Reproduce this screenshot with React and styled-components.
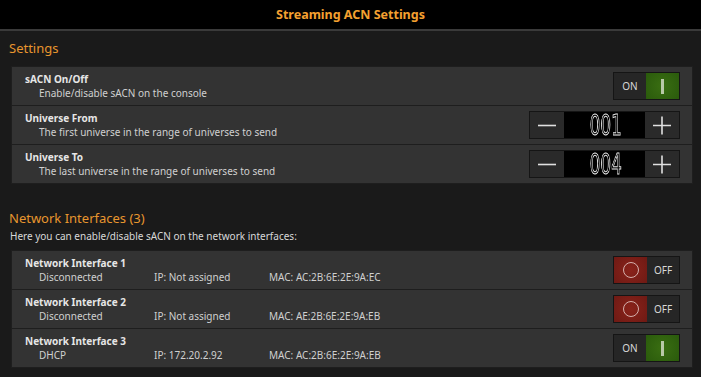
import React from "react";
import styled, { createGlobalStyle } from "styled-components";

const Global = createGlobalStyle`
  html, body {
    margin: 0;
    padding: 0;
    background: #1a1a1a;
  }
  body {
    font-family: "Noto Sans", "Open Sans", sans-serif;
    color: #dcdcdc;
  }
`;

const Page = styled.div`
  width: 701px;
  height: 377px;
  background: #1a1a1a;
  overflow: hidden;
`;

const Header = styled.div`
  height: 29px;
  background: #000;
  border-bottom: 2px solid #3a3a3a;
  display: flex;
  align-items: center;
  justify-content: center;
  color: #f5a030;
  font-weight: 700;
  font-size: 12.5px;
`;

const Section = styled.div`
  padding: 0 9px 0 11px;
`;

const SectionTitle = styled.div`
  color: #e8962e;
  font-size: 13px;
  margin-left: -2px;
  height: ${(p) => p.h}px;
  display: flex;
  align-items: ${(p) => (p.bottom ? "flex-end" : "center")};
`;

const Hint = styled.div`
  font-size: 10px;
  color: #d8d8d8;
  margin-left: -1px;
  height: 18px;
  display: flex;
  align-items: center;
  margin-bottom: 5px;
`;

const Panel = styled.div`
  background: #1e1e1e;
  border: 1px solid #1e1e1e;
  display: flex;
  flex-direction: column;
  gap: 1px;
  width: 680px;
  margin-top: ${(p) => p.mt || 0}px;
`;

const Row = styled.div`
  height: 38px;
  background: #333333;
  display: flex;
  align-items: center;
  padding: 0 12px 0 13px;
`;

const Info = styled.div`
  flex: 1;
  display: flex;
  flex-direction: column;
  justify-content: center;
  padding-top: 1px;
`;

const Title = styled.div`
  font-weight: 700;
  font-size: 10px;
  color: #e6e6e6;
  line-height: 14px;
`;

const Sub = styled.div`
  font-size: 10px;
  color: #d0d0d0;
  line-height: 15px;
  padding-left: 14px;
  display: flex;
`;

const Col = styled.span`
  width: ${(p) => p.w}px;
  flex: none;
`;

const Toggle = styled.div`
  display: flex;
  width: 67px;
  height: 28px;
  border: 1px solid #151515;
  box-sizing: border-box;
`;

const ToggleLabel = styled.div`
  width: 32px;
  background: #262626;
  display: flex;
  align-items: center;
  justify-content: center;
  font-size: 10px;
  color: #d8d8d8;
`;

const ToggleKnob = styled.div`
  flex: 1;
  display: flex;
  align-items: center;
  justify-content: center;
  background: ${(p) =>
    p.on
      ? "radial-gradient(circle at 50% 50%, #3a6e12 0%, #2a5a0c 100%)"
      : "radial-gradient(circle at 50% 50%, #8a221a 0%, #6e1a14 100%)"};
`;

const Bar = styled.div`
  width: 3px;
  height: 15px;
  background: #b9c9a8;
`;

const Ring = styled.div`
  width: 14px;
  height: 14px;
  border: 1.5px solid #d6b0ac;
  border-radius: 50%;
`;

const Stepper = styled.div`
  display: flex;
  width: 151px;
  height: 28px;
  border: 1px solid #151515;
  box-sizing: border-box;
`;

const StepBtn = styled.div`
  width: 34px;
  background: #2a2a2a;
  display: flex;
  align-items: center;
  justify-content: center;
`;

const Display = styled.div`
  flex: 1;
  background: #000;
  display: flex;
  align-items: center;
  justify-content: center;
`;

const Digits = styled.span`
  display: inline-block;
  font-family: "DejaVu Sans", sans-serif;
  font-size: 29px;
  letter-spacing: 0px;
  color: #000;
  -webkit-text-stroke: 1px #e6e6e6;
  transform: scaleX(0.58);
  will-change: transform;
  line-height: 1;
  margin-left: 2px;
`;

const Minus = () => (
  <svg width="20" height="20" viewBox="0 0 20 20">
    <path d="M1 10.5h18" stroke="#e0e0e0" strokeWidth="1.6" />
  </svg>
);

const Plus = () => (
  <svg width="20" height="20" viewBox="0 0 20 20">
    <path d="M1 10.5h18M10 1.5v18" stroke="#e0e0e0" strokeWidth="1.6" />
  </svg>
);

const Switch = ({ on }) =>
  on ? (
    <Toggle>
      <ToggleLabel>ON</ToggleLabel>
      <ToggleKnob on>
        <Bar />
      </ToggleKnob>
    </Toggle>
  ) : (
    <Toggle>
      <ToggleKnob>
        <Ring />
      </ToggleKnob>
      <ToggleLabel>OFF</ToggleLabel>
    </Toggle>
  );

const Counter = ({ value }) => (
  <Stepper>
    <StepBtn>
      <Minus />
    </StepBtn>
    <Display>
      <Digits>{value}</Digits>
    </Display>
    <StepBtn>
      <Plus />
    </StepBtn>
  </Stepper>
);

const interfaces = [
  { name: "Network Interface 1", state: "Disconnected", ip: "Not assigned", mac: "AC:2B:6E:2E:9A:EC", on: false },
  { name: "Network Interface 2", state: "Disconnected", ip: "Not assigned", mac: "AE:2B:6E:2E:9A:EB", on: false },
  { name: "Network Interface 3", state: "DHCP", ip: "172.20.2.92", mac: "AC:2B:6E:2E:9A:EB", on: true },
];

export default function App() {
  return (
    <Page>
      <Global />
      <Header>Streaming ACN Settings</Header>
      <Section>
        <SectionTitle h={34}>Settings</SectionTitle>
        <Panel mt={1}>
          <Row>
            <Info>
              <Title>sACN On/Off</Title>
              <Sub>Enable/disable sACN on the console</Sub>
            </Info>
            <Switch on />
          </Row>
          <Row>
            <Info>
              <Title>Universe From</Title>
              <Sub>The first universe in the range of universes to send</Sub>
            </Info>
            <Counter value="001" />
          </Row>
          <Row>
            <Info>
              <Title>Universe To</Title>
              <Sub>The last universe in the range of universes to send</Sub>
            </Info>
            <Counter value="004" />
          </Row>
        </Panel>
        <SectionTitle h={43} bottom>
          Network Interfaces (3)
        </SectionTitle>
        <Hint>Here you can enable/disable sACN on the network interfaces:</Hint>
        <Panel>
          {interfaces.map((n) => (
            <Row key={n.name}>
              <Info>
                <Title>{n.name}</Title>
                <Sub>
                  <Col w={115}>{n.state}</Col>
                  <Col w={115}>IP: {n.ip}</Col>
                  <Col w={150}>MAC: {n.mac}</Col>
                </Sub>
              </Info>
              <Switch on={n.on} />
            </Row>
          ))}
        </Panel>
      </Section>
    </Page>
  );
}
